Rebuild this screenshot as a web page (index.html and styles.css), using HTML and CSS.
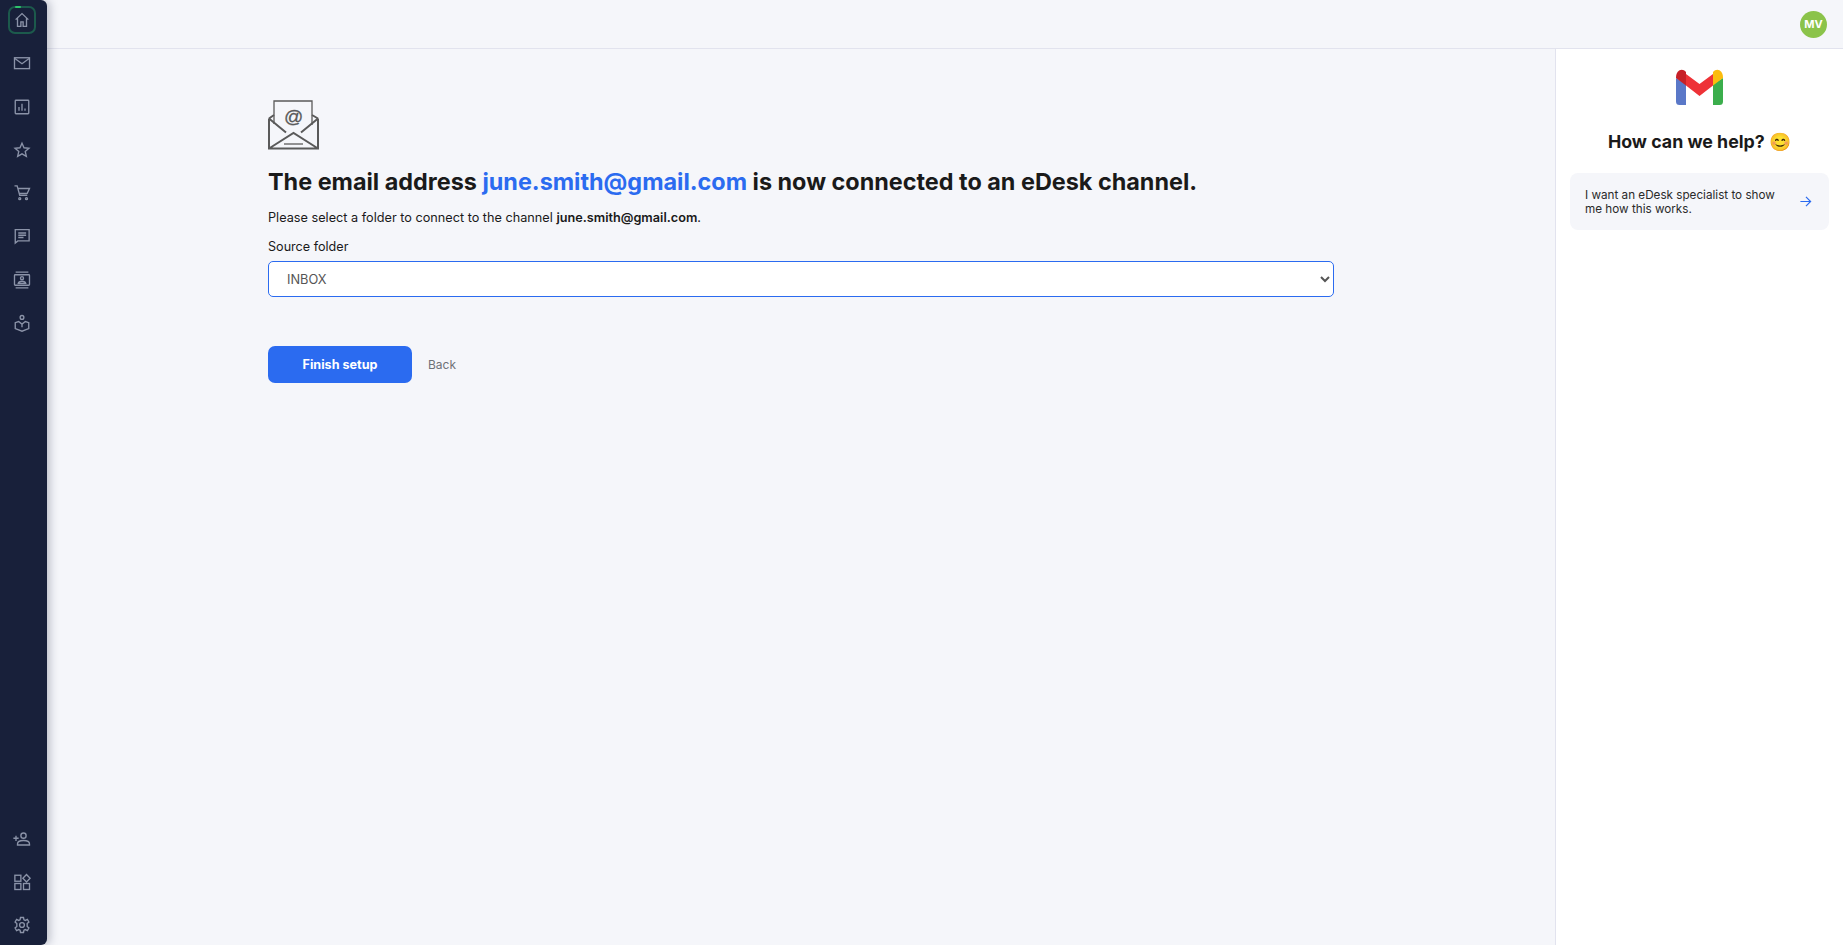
FILE: index.html
```html
<!DOCTYPE html>
<html lang="en">
<head>
<meta charset="utf-8">
<title>eDesk - Connect email</title>
<link rel="stylesheet" href="styles.css">
</head>
<body>
<div class="app">
  <nav class="sidebar">
    <div class="nav-group">
      <a class="nav-item active"><span class="marker"></span>
        <svg class="ico" viewBox="0 0 24 24"><path d="M3.500 11.500 12 3.500l8.500 8M6 9.500V20.500h4.500v-6h3v6H18V9.500"/></svg></a>
      <a class="nav-item"><svg class="ico" viewBox="0 0 24 24"><rect x="2" y="5" width="20" height="14.500"/><path d="M2.500 6 12 13l9.500-7"/></svg></a>
      <a class="nav-item"><svg class="ico" viewBox="0 0 24 24"><rect x="3" y="3" width="18" height="18" rx="1"/><path d="M8 17v-5M12 17V7.500M16 17v-3"/></svg></a>
      <a class="nav-item"><svg class="ico" viewBox="0 0 24 24"><path d="m12 3 2.700 6 6.600.7-5 4.300 1.500 6.500L12 17.200l-5.800 3.300 1.500-6.500-5-4.300 6.600-.7z"/></svg></a>
      <a class="nav-item"><svg class="ico" viewBox="0 0 24 24"><path d="M2 2.500h3.500L9 15h10M6.500 6H22l-3 6.500H8.500"/><circle cx="9" cy="19.500" r="1.300"/><circle cx="18" cy="19.500" r="1.300"/></svg></a>
      <a class="nav-item"><svg class="ico" viewBox="0 0 24 24"><path d="M3 3.500h18.500v15H6.500L3 21.500zM7 8h10.500M7 11h10.500M7 14h7"/></svg></a>
      <a class="nav-item"><svg class="ico" viewBox="0 0 24 24"><path d="M3.500 1.500h17M3.500 22.500h17"/><rect x="2" y="5" width="20" height="14" rx="1"/><circle cx="12" cy="9.500" r="2"/><path d="M7 16.500c.5-2 2.800-2.800 5-2.800s4.500.8 5 2.800z"/></svg></a>
      <a class="nav-item"><svg class="ico" viewBox="0 0 24 24"><circle cx="12" cy="4.500" r="2.500"/><path d="M12 13.500 7.500 10 3 11.500v8l9 3.500 9-3.500v-8L16.500 10zM12 13.500v4"/></svg></a>
    </div>
    <div class="nav-group nav-group-end">
      <a class="nav-item"><svg class="ico" viewBox="0 0 24 24"><circle cx="14" cy="7.500" r="3.500"/><path d="M6 20v-1.500c0-3 4-4.500 8-4.500s8 1.500 8 4.500V20zM.5 11h7M4 7.500v7"/></svg></a>
      <a class="nav-item"><svg class="ico" viewBox="0 0 24 24"><rect x="2.500" y="3" width="8" height="8"/><rect x="2.500" y="14" width="8" height="8"/><rect x="14" y="14" width="8" height="8"/><path d="m18 2 4.800 5-4.800 5-4.800-5z"/></svg></a>
      <a class="nav-item"><svg class="ico" viewBox="0 0 24 24"><circle cx="12" cy="12" r="3.200"/><path d="M10 2h4l.6 3 1.900.9 2.700-1.300 2 3.400-2.300 2v4l2.300 2-2 3.400-2.700-1.300-1.900.9-.6 3h-4l-.6-3-1.900-.9-2.700 1.300-2-3.400 2.300-2v-4L2.800 8l2-3.400 2.700 1.300 1.900-.9z"/></svg></a>
    </div>
  </nav>
  <div class="page">
    <header class="topbar"><span class="avatar">MV</span></header>
    <div class="body-row">
      <main class="content">
        <svg class="mail-art" viewBox="0 0 52 50">
          <path class="thin" d="M6 24V1h38v24"/>
          <path class="thick" d="M1 18.500 6 15M44 15l6 3.500M1 18.500V48.500h49V18.500M1 18.500l17 14M50 18.500l-17 14M1 48.500 25.500 33 50 48.500"/>
          <path class="thin" d="M16 44h19"/>
          <text x="25.700" y="23" class="at">@</text>
        </svg>
        <h1 class="title">The email address <span class="accent">june.smith@gmail.com</span> is now connected to an eDesk channel.</h1>
        <p class="lead">Please select a folder to connect to the channel <strong>june.smith@gmail.com</strong>.</p>
        <label class="field-label" for="folder">Source folder</label>
        <select class="select" id="folder"><option>INBOX</option></select>
        <div class="actions">
          <button class="primary" type="button">Finish setup</button>
          <a class="back">Back</a>
        </div>
      </main>
      <aside class="help">
        <svg class="gmail" viewBox="0 0 47 36">
          <path fill="#5a78c8" d="M0 9v23.500A3.500 3.500 0 0 0 3.500 36H10V15z"/>
          <path fill="#3bae4c" d="M47 9v23.500a3.500 3.500 0 0 1-3.500 3.500H37V15z"/>
          <path fill="#ee3237" d="M10 5 23.500 15 37 5v11.500L23.500 27 10 16.500z"/>
          <path fill="#c72027" d="M0 8.500C0 1.500 6 -1.500 10 3v13.500L0 9z"/>
          <path fill="#fbbc0e" d="M47 8.500C47 1.500 41 -1.500 37 3v13.500L47 9z"/>
        </svg>
        <h2 class="help-title">How can we help? <span class="emoji">😊</span></h2>
        <a class="help-card">
          <span class="help-text">I want an eDesk specialist to show me how this works.</span>
          <svg class="arrow" viewBox="0 0 14 14"><path d="M1.500 7h11M7.500 2l5 5-5 5"/></svg>
        </a>
      </aside>
    </div>
  </div>
</div>
</body>
</html>
```

FILE: styles.css
```css
* { box-sizing: border-box; }
html, body { margin: 0; height: 100%; }
body {
  font-family: Inter, "Noto Sans", sans-serif;
  background: #f5f6fa;
  color: #1a1a1a;
  overflow: hidden;
}
.app { display: flex; height: 945px; }

.sidebar {
  width: 47px;
  flex: none;
  background: #18203a;
  border-radius: 0 6px 6px 0;
  box-shadow: 3px 0 8px rgba(24, 32, 58, .25);
  display: flex;
  flex-direction: column;
  justify-content: space-between;
  padding: 6px 0;
  position: relative;
  z-index: 2;
}
.nav-group { display: flex; flex-direction: column; gap: 15.300px; }
.nav-group-end { gap: 15px; }
.nav-item {
  width: 28px;
  height: 28px;
  margin-left: 8px;
  display: flex;
  align-items: center;
  justify-content: center;
  position: relative;
}
.active { border: 2px solid #1c5a4c; border-radius: 7px; }
.marker {
  position: absolute;
  top: -2px;
  left: 5px;
  width: 6px;
  height: 2px;
  background: #2fc46c;
  border-radius: 1px;
}
.ico {
  width: 18px;
  height: 18px;
  flex: none;
  fill: none;
  stroke: #8b93a8;
  stroke-width: 1.800;
}

.page { flex: 1; min-width: 0; display: flex; flex-direction: column; }
.topbar {
  height: 49px;
  flex: none;
  border-bottom: 1px solid #e2e3ee;
  display: flex;
  align-items: center;
  justify-content: flex-end;
  padding-right: 16px;
}
.avatar {
  width: 27px;
  height: 27px;
  border-radius: 50%;
  background: #8bc34a;
  color: #fff;
  font-size: 11px;
  font-weight: 700;
  display: flex;
  align-items: center;
  justify-content: center;
}
.body-row { flex: 1; display: flex; min-height: 0; }

.content { flex: 1; min-width: 0; padding: 51px 0 0 221px; }
.mail-art { display: block; width: 52px; height: 50px; margin-bottom: 16px; }
.thin { fill: none; stroke: #5a5a5a; stroke-width: 1.300; }
.thick { fill: none; stroke: #5a5a5a; stroke-width: 2; }
.at { font: 400 19px "Liberation Sans", sans-serif; fill: #5a5a5a; stroke: #5a5a5a; stroke-width: .3; text-anchor: middle; }
.title { margin: 0; font-size: 23.400px; line-height: 32px; font-weight: 700; }
.accent { color: #2b6bf0; }
.lead { margin: 11px 0 0; font-size: 12.700px; line-height: 18px; }
.lead strong { font-weight: 600; }
.field-label { display: block; margin-top: 11px; font-size: 12.600px; line-height: 18px; }
.select {
  display: block;
  width: 1066px;
  height: 36px;
  margin-top: 5px;
  padding: 0 14px;
  background: #fff;
  border: 1px solid #2b6bf0;
  border-radius: 5px;
  font: 12.800px Inter, sans-serif;
  color: #555;
  outline: none;
}
.actions { display: flex; align-items: center; gap: 16px; margin-top: 49px; }
.primary {
  width: 144px;
  height: 37px;
  border: 0;
  border-radius: 7px;
  background: #2b6bf0;
  color: #fff;
  font: 700 12.600px Inter, sans-serif;
}
.back { font-size: 12px; color: #6f7277; }

.help {
  width: 288px;
  flex: none;
  background: #fff;
  border-left: 1px solid #e2e3ee;
  display: flex;
  flex-direction: column;
  align-items: center;
  padding: 20px 14px 0;
}
.gmail { display: block; width: 47px; height: 36px; }
.help-title {
  margin: 24px 0 0;
  font-size: 17.800px;
  line-height: 26px;
  font-weight: 700;
  text-align: center;
}
.emoji { font-family: "Noto Color Emoji", Inter, sans-serif; }
.help-card {
  align-self: stretch;
  height: 57px;
  margin-top: 18px;
  padding: 0 17px 0 15px;
  background: #f5f6fa;
  border-radius: 8px;
  display: flex;
  align-items: center;
  justify-content: space-between;
  gap: 14px;
}
.help-text { font-size: 11.700px; line-height: 14px; color: #2a2a2a; }
.arrow { width: 13px; height: 13px; flex: none; fill: none; stroke: #2b6bf0; stroke-width: 1.300; }
```
